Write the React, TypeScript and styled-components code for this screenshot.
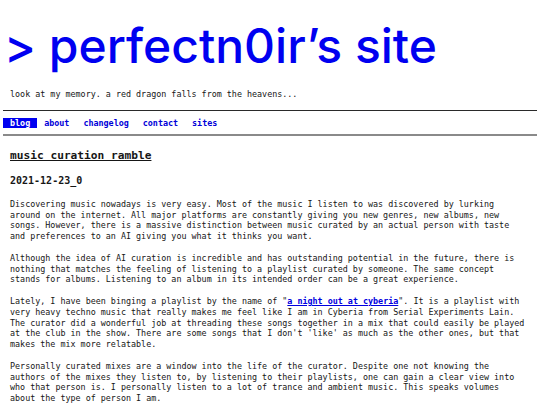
import React from "react";
import styled, { createGlobalStyle } from "styled-components";

const Global = createGlobalStyle`
  html, body { margin: 0; padding: 0; background: #ffffff; }
  body { font-family: "DejaVu Sans Mono", "Liberation Mono", monospace; color: #161616; }
`;

const Page = styled.div`
  padding: 0 3px;
  width: 534px;
  font-size: 8.4px;
  line-height: 10.8px;
`;

const Header = styled.header`
  padding: 22px 0 0 0;
`;

const Title = styled.h1`
  margin: 0 0 0 1px;
  font-family: Inter, "Noto Sans", sans-serif;
  font-weight: 500;
  font-size: 48px;
  line-height: 48px;
  color: #0000f0;
  letter-spacing: 0;
`;

const Tagline = styled.p`
  margin: 19px 0 0 0;
  padding-left: 7px;
`;

const Rule = styled.div<{ $thick?: boolean }>`
  height: ${(p) => (p.$thick ? "2px" : "1px")};
  background: ${(p) => (p.$thick ? "#8a8a8a" : "#2a2a2a")};
  margin-top: ${(p) => (p.$thick ? "6px" : "10px")};
`;

const Nav = styled.nav`
  display: flex;
  margin-top: 7px;
`;

const NavLink = styled.a<{ $active?: boolean }>`
  padding: 0 7px;
  line-height: 10px;
  font-weight: bold;
  text-decoration: none;
  color: ${(p) => (p.$active ? "#ffffff" : "#0000d8")};
  background: ${(p) => (p.$active ? "#0000f0" : "transparent")};
`;

const Main = styled.main`
  padding: 0 7px;
  width: 518px;
`;

const Heading = styled.h2`
  margin: 13px 0 0 0;
  font-size: 11.2px;
  line-height: 14px;
  font-weight: bold;
  text-decoration: underline;
`;

const DateLine = styled.h3`
  margin: 12px 0 0 0;
  font-size: 10px;
  line-height: 12px;
  font-weight: bold;
`;

const Para = styled.p<{ $first?: boolean }>`
  margin: ${(p) => (p.$first ? "12px" : "10.8px")} 0 0 0;
`;

const TextLink = styled.a`
  color: #0000e0;
  font-weight: bold;
  text-decoration: underline;
`;

const navItems = ["blog", "about", "changelog", "contact", "sites"];

export default function App() {
  return (
    <>
      <Global />
      <Page>
        <Header>
          <Title>&gt; perfectn0ir’s site</Title>
          <Tagline>look at my memory. a red dragon falls from the heavens...</Tagline>
        </Header>
        <Rule />
        <Nav>
          {navItems.map((n, i) => (
            <NavLink key={n} href="#" $active={i === 0}>
              {n}
            </NavLink>
          ))}
        </Nav>
        <Rule $thick />
        <Main>
          <Heading>music curation ramble</Heading>
          <DateLine>2021-12-23_0</DateLine>
          <Para $first>
            Discovering music nowadays is very easy. Most of the music I listen to was discovered by lurking
            around on the internet. All major platforms are constantly giving you new genres, new albums, new
            songs. However, there is a massive distinction between music curated by an actual person with taste
            and preferences to an AI giving you what it thinks you want.
          </Para>
          <Para>
            Although the idea of AI curation is incredible and has outstanding potential in the future, there is
            nothing that matches the feeling of listening to a playlist curated by someone. The same concept
            stands for albums. Listening to an album in its intended order can be a great experience.
          </Para>
          <Para>
            Lately, I have been binging a playlist by the name of "<TextLink href="#">a night out at cyberia</TextLink>". It is a playlist with
            very heavy techno music that really makes me feel like I am in Cyberia from Serial Experiments Lain.
            The curator did a wonderful job at threading these songs together in a mix that could easily be played
            at the club in the show. There are some songs that I don't 'like' as much as the other ones, but that
            makes the mix more relatable.
          </Para>
          <Para>
            Personally curated mixes are a window into the life of the curator. Despite one not knowing the
            authors of the mixes they listen to, by listening to their playlists, one can gain a clear view into
            who that person is. I personally listen to a lot of trance and ambient music. This speaks volumes
            about the type of person I am.
          </Para>
        </Main>
      </Page>
    </>
  );
}
